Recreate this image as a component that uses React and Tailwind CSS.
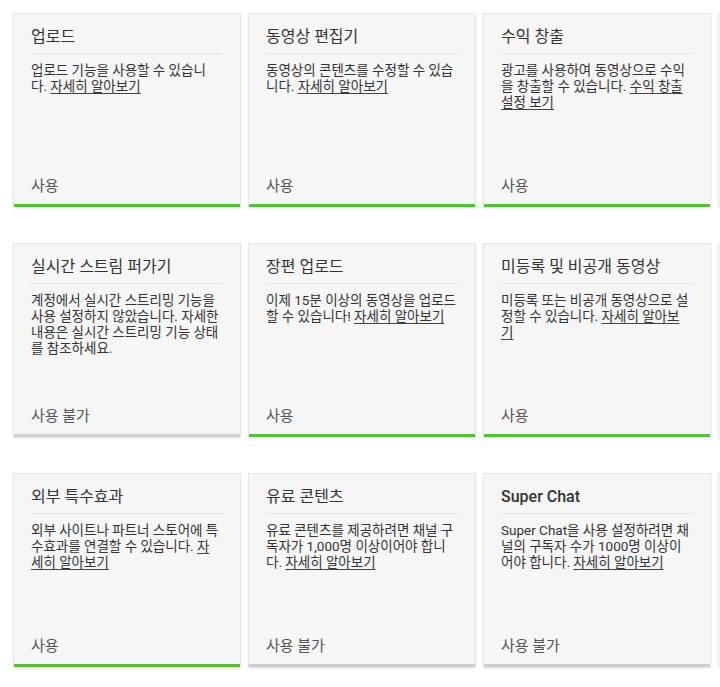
import React from 'react';

const Link = ({ children }) => (
  <span className="underline underline-offset-2 decoration-[#444]">{children}</span>
);

const features = [
  {
    title: '업로드',
    body: (
      <>
        업로드 기능을 사용할 수 있습니<br />다. <Link>자세히 알아보기</Link>
      </>
    ),
    status: '사용',
    on: true,
  },
  {
    title: '동영상 편집기',
    body: (
      <>
        동영상의 콘텐츠를 수정할 수 있습<br />니다. <Link>자세히 알아보기</Link>
      </>
    ),
    status: '사용',
    on: true,
  },
  {
    title: '수익 창출',
    body: (
      <>
        광고를 사용하여 동영상으로 수익<br />을 창출할 수 있습니다. <Link>수익 창출<br />설정 보기</Link>
      </>
    ),
    status: '사용',
    on: true,
  },
  {
    title: '실시간 스트림 퍼가기',
    body: (
      <>
        계정에서 실시간 스트리밍 기능을<br />사용 설정하지 않았습니다. 자세한<br />내용은 실시간 스트리밍 기능 상태<br />를 참조하세요.
      </>
    ),
    status: '사용 불가',
    on: false,
  },
  {
    title: '장편 업로드',
    body: (
      <>
        이제 15분 이상의 동영상을 업로드<br />할 수 있습니다! <Link>자세히 알아보기</Link>
      </>
    ),
    status: '사용',
    on: true,
  },
  {
    title: '미등록 및 비공개 동영상',
    body: (
      <>
        미등록 또는 비공개 동영상으로 설<br />정할 수 있습니다. <Link>자세히 알아보<br />기</Link>
      </>
    ),
    status: '사용',
    on: true,
  },
  {
    title: '외부 특수효과',
    body: (
      <>
        외부 사이트나 파트너 스토어에 특<br />수효과를 연결할 수 있습니다. <Link>자<br />세히 알아보기</Link>
      </>
    ),
    status: '사용',
    on: true,
  },
  {
    title: '유료 콘텐츠',
    body: (
      <>
        유료 콘텐츠를 제공하려면 채널 구<br />독자가 1,000명 이상이어야 합니<br />다. <Link>자세히 알아보기</Link>
      </>
    ),
    status: '사용 불가',
    on: false,
  },
  {
    title: 'Super Chat',
    latin: true,
    body: (
      <>
        Super Chat을 사용 설정하려면 채<br />널의 구독자 수가 1000명 이상이<br />어야 합니다. <Link>자세히 알아보기</Link>
      </>
    ),
    status: '사용 불가',
    on: false,
  },
];

const FeatureCard = ({ item }) => (
  <div className="h-[193px] flex flex-col bg-[#f6f6f6] shadow-[0_0_0_1px_#e6e6e6,0_1px_3px_rgba(0,0,0,0.12)]">
    <div className="flex-1 flex flex-col px-[17px]">
      <div
        className={`pt-[13px] h-[40px] border-b border-[#e3e3e3] text-[16px] leading-5 text-[#333] ${
          item.latin ? 'font-medium' : ''
        }`}
      >
        {item.title}
      </div>
      <p className="mt-[8px] text-[13.5px] leading-4 text-[#333] whitespace-nowrap">{item.body}</p>
      <div className="mt-auto pb-2 text-[15px] leading-5 text-[#555]">{item.status}</div>
    </div>
    <div className={`h-[3px] ${item.on ? 'bg-[#56bf39]' : 'bg-[#cfcfcf]'}`}></div>
  </div>
);

const App = () => {
  return (
    <div
      className="w-[720px] h-[687px] overflow-hidden bg-white"
      style={{ fontFamily: 'Roboto, "Noto Sans CJK KR", sans-serif' }}
    >
      <div className="pl-[14px] pt-[14px] grid grid-cols-[226px_226px_226px_226px] gap-x-[9px] gap-y-[37px] w-[960px]">
        {features.map((item, i) => (
          <React.Fragment key={i}>
            <FeatureCard item={item} />
            {i % 3 === 2 && <div className="h-[193px] bg-[#f6f6f6] shadow-[0_0_0_1px_#e6e6e6]"></div>}
          </React.Fragment>
        ))}
      </div>
    </div>
  );
};

export default App;
